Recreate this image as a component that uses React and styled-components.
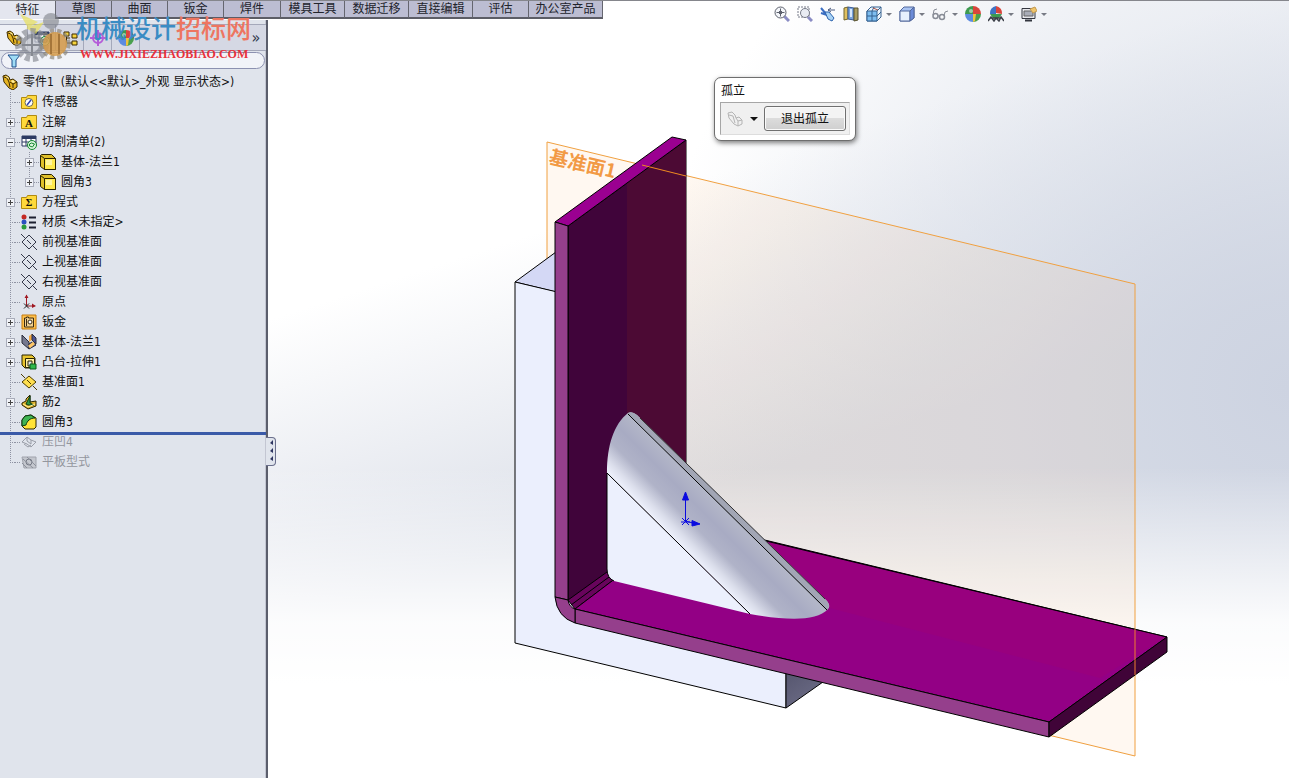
import React, { useState } from "react";
import styled, { createGlobalStyle } from "styled-components";

const tabs = [
  { name: "特征", width: 56 },
  { name: "草图", width: 56 },
  { name: "曲面", width: 56 },
  { name: "钣金", width: 56 },
  { name: "焊件", width: 57 },
  { name: "模具工具", width: 64 },
  { name: "数据迁移", width: 64 },
  { name: "直接编辑", width: 64 },
  { name: "评估", width: 56 },
  { name: "办公室产品", width: 74 },
];

const tree = [
  { icon: "sensor", text: "传感器" },
  { icon: "note", text: "注解", sign: "+" },
  { icon: "cutlist", text: "切割清单(2)", sign: "-" },
  { icon: "body", text: "基体-法兰1", sign: "+", level: 1 },
  { icon: "body", text: "圆角3", sign: "+", level: 1, lastChild: true },
  { icon: "sigma", text: "方程式", sign: "+" },
  { icon: "material", text: "材质 <未指定>" },
  { icon: "plane", text: "前视基准面" },
  { icon: "plane", text: "上视基准面" },
  { icon: "plane", text: "右视基准面" },
  { icon: "origin", text: "原点" },
  { icon: "sheet", text: "钣金", sign: "+" },
  { icon: "flange", text: "基体-法兰1", sign: "+" },
  { icon: "extrude", text: "凸台-拉伸1", sign: "+" },
  { icon: "planeGold", text: "基准面1" },
  { icon: "rib", text: "筋2", sign: "+" },
  { icon: "fillet", text: "圆角3" },
  { icon: "indent", text: "压凹4", off: true, rollback: true },
  { icon: "flat", text: "平板型式", off: true, last: true },
];

const folder = (
  <path d="M0.500 3.500h5l1-2h9v13h-15z" fill="#ffd93b" stroke="#b08a10" />
);

const icons = {
  part: (
    <>
      <path d="M1 2l3-1 3 2 1 3 3-1 4 3v5l-4 3-4-2-5-6z" fill="#e6b422" stroke="#3d2b00" />
      <path d="M2 3l3 1 2 4 1 5M8 8l3 2v4M11 10l4-2" stroke="#3d2b00" />
      <path d="M3 2l3 1 1 2-2-1zM9 7l2-1 2 2-2 1z" fill="#fff2a8" />
    </>
  ),
  sensor: (
    <>
      {folder}
      <circle cx="8" cy="8.500" r="4" fill="#fff" stroke="#6e6a50" />
      <path d="M6 11l4-5" stroke="#2b3fb0" strokeWidth="1.500" />
    </>
  ),
  note: (
    <>
      {folder}
      <text x="8" y="13" textAnchor="middle" fill="#111" fontFamily="Liberation Serif, serif" fontWeight="700" fontSize="11">A</text>
    </>
  ),
  cutlist: (
    <>
      <path d="M1 2h14v10H1z" fill="#fff" stroke="#2d3b62" />
      <path d="M1 2h14v3H1z" fill="#2d3b62" />
      <path d="M1 8h14M5 2v10M10 2v10" stroke="#2d3b62" />
      <circle cx="11" cy="11" r="4.500" fill="#d8f5dc" stroke="#15882f" />
      <path d="M8.500 10l2-1 3 1-2 3-3-1z" stroke="#15882f" />
    </>
  ),
  body: (
    <>
      <path d="M0.500 1.500l1-1h10l4 4v11h-11l-4-3z" fill="#e0c02a" stroke="#2b2400" />
      <path d="M4.500 4.500h11v11h-11z" fill="#ffe94d" stroke="#2b2400" />
      <path d="M0.500 1.500l4 3" stroke="#2b2400" />
      <path d="M6 6h6v5H6z" fill="#fff6a0" />
    </>
  ),
  sigma: (
    <>
      {folder}
      <text x="8" y="12" textAnchor="middle" fill="#111" fontFamily="Liberation Serif, serif" fontWeight="700" fontSize="10">Σ</text>
    </>
  ),
  material: (
    <>
      <circle cx="3" cy="3" r="2.500" fill="#c42a24" />
      <circle cx="3" cy="8" r="2.500" fill="#2b4fc0" />
      <circle cx="3" cy="13" r="2.500" fill="#2a9a3c" />
      <path d="M8 3.500h7M8 8.500h7M8 13.500h7" stroke="#1d2030" strokeWidth="2" />
    </>
  ),
  plane: (
    <path d="M8 1l7 7-7 7-7-7zM0 0l5 5M11 11l5 5M6 6l4 4" stroke="#333748" />
  ),
  origin: (
    <>
      <path d="M5.500 1v11h8" stroke="#a01822" />
      <path d="M3.500 4l2-3.500 2 3.500zM11 9.500l4 2.500-4 2z" fill="#a01822" />
      <path d="M3 9.500l5 5M8 9.500l-5 5" stroke="#222" />
    </>
  ),
  sheet: (
    <>
      <path d="M1 1h14v14H1z" fill="#ffc04a" stroke="#c27a10" />
      <path d="M3.500 13V4h2v-1h2v1h5v9z" fill="#f0d090" stroke="#3a2a10" />
      <circle cx="9" cy="8" r="2" fill="#fff" stroke="#3a2a10" />
      <path d="M5.500 5v7M12.500 4v9" stroke="#3a2a10" />
    </>
  ),
  flange: (
    <>
      <path d="M1 1l7 7v7L1 9z" fill="#74788f" stroke="#2a2c3a" />
      <path d="M8 8l3-2V0l-3 2z" fill="#f3a944" />
      <path d="M11 6l4 4V4l-4-4zM8 15l7-4-4-3-3 2z" fill="#4c5494" stroke="#2a2c3a" />
      <path d="M8 13l5-4" stroke="#ffc766" strokeWidth="3" />
    </>
  ),
  extrude: (
    <>
      <path d="M1 1h10l3 3v9l-1 1H4L1 11z" fill="#e9c52d" stroke="#2b2400" />
      <path d="M4.500 4.500h9v9h-9z" fill="#fff0a0" stroke="#2b2400" />
      <path d="M7 7h4v5H7z" fill="#e0e4ec" stroke="#2b2400" />
      <path d="M9 10h6v5H9z" fill="#2fb84a" stroke="#0b5a1c" />
    </>
  ),
  planeGold: (
    <>
      <path d="M8 2l7 6-7 6-7-6z" fill="#ffdf50" stroke="#4c3c00" />
      <path d="M0 0l4 4M12 12l4 4M6 6l4 4" stroke="#4c3c00" />
    </>
  ),
  rib: (
    <>
      <path d="M1 9l4-2v-2l4-4v7l6-1v5l-8 3-6-4z" fill="#e0b52c" stroke="#2b2400" />
      <path d="M5 10l4-8v7l4 2H7z" fill="#2f9a44" stroke="#0b3a14" />
      <path d="M2 10l5 3 7-3" stroke="#fff0a0" />
    </>
  ),
  fillet: (
    <>
      <path d="M1 6l3-4 6-1 5 3v9l-2 2H4l-3-3z" fill="#ffe236" stroke="#2b2400" />
      <path d="M1 6l3-4 6-1 4 3c-5 0-8 3-9 7l-4 1z" fill="#3fb452" stroke="#0b3a14" />
    </>
  ),
  indent: (
    <path d="M1 8l5-5 4 3 5 2-5 5-4-3zM6 3v4l4 3M3 10l4 3 3-2M10 6v4" stroke="#9a9ea8" />
  ),
  flat: (
    <>
      <path d="M1 3h14v11H3z" fill="#c4c7ce" stroke="#a0a3ac" />
      <circle cx="8" cy="8" r="3" stroke="#777b86" />
      <path d="M2 5l10 9M6 3l9 9M1 9l5 5" stroke="#8c909b" />
    </>
  ),
  config: (
    <>
      <path d="M2 2h5v4H2zM10 4h5v4h-5zM10 11h5v4h-5z" fill="#f5d33c" stroke="#3d2b00" />
      <path d="M4.500 6v7H10M4.500 8H8" stroke="#3d2b00" />
    </>
  ),
  target: (
    <>
      <circle cx="8" cy="8" r="5" stroke="#b55bd8" strokeWidth="2" />
      <path d="M8 0v16M0 8h16" stroke="#b55bd8" strokeWidth="2" />
    </>
  ),
  ball: (
    <>
      <path d="M8 8V0a8 8 0 0 1 8 8z" fill="#d8453c" />
      <path d="M8 8H0a8 8 0 0 1 8-8z" fill="#3d9a50" />
      <path d="M8 8v8a8 8 0 0 1-8-8z" fill="#5c8be0" />
      <path d="M8 8h8a8 8 0 0 1-8 8z" fill="#4aa04e" />
      <path d="M8 8h3l-1 7-2 1z" fill="#edc23c" />
      <circle cx="6" cy="5" r="2" fill="#ffffff" opacity="0.500" />
    </>
  ),
  funnel: <path d="M1 2h12l-4 5v7H5V7z" fill="#9fdcf5" stroke="#1e4f8c" />,
  zoomFit: (
    <>
      <path d="M10 10l5 5" stroke="#8a8cc4" strokeWidth="3" />
      <circle cx="6.500" cy="6.500" r="5.500" fill="#f4f6fa" stroke="#5c606c" />
      <path d="M6.500 2.500v8M2.500 6.500h8" stroke="#5c606c" strokeDasharray="3 2" />
      <path d="M5 5h3v3H5z" fill="#5c606c" />
    </>
  ),
  zoomArea: (
    <>
      <path d="M1 1h11v10H1z" stroke="#777b88" strokeDasharray="2 1" />
      <path d="M11 11l4 4" stroke="#8a8cc4" strokeWidth="3" />
      <circle cx="8" cy="7" r="4.500" fill="#e9ecf3" stroke="#777b88" />
    </>
  ),
  prevView: (
    <>
      <path d="M1 2l5 6M1 7l6 2" stroke="#3b6ec2" strokeWidth="2" />
      <path d="M5 6l4 0 5 6-2 3-4-2z" fill="#a9d3f5" stroke="#2a62ad" />
      <path d="M8 4h7M8 4l3-2M8 4l3 2" stroke="#4a5a80" />
    </>
  ),
  section: (
    <>
      <path d="M1 2l4-1v12l-4 1z" fill="#e0c060" stroke="#6f6430" />
      <path d="M5 1l6 1v12l-6-1z" fill="#79a3dc" stroke="#3b5c94" />
      <path d="M11 2l4 0v12l-4 1z" fill="#a99c60" stroke="#56502f" />
      <path d="M8 3v8" stroke="#d7e8fb" strokeWidth="2" />
    </>
  ),
  orient: (
    <>
      <path d="M1 5l4-4h10v10l-4 4H1z" fill="#eef6fd" stroke="#35608f" />
      <path d="M1 5h10v10H1z" fill="#7dbdf0" stroke="#35608f" />
      <path d="M11 5l4-4M6 5v10M1 10h10l4-4M8 1l-2 4" stroke="#35608f" />
      <path d="M7 2l5 2" stroke="#a8554a" />
    </>
  ),
  display: (
    <>
      <path d="M1 5l4-4h10v11l-4 3H1z" fill="#a9c3f2" stroke="#53689c" />
      <path d="M1 5h10v10H1z" fill="#e8f1fd" stroke="#53689c" />
      <path d="M11 5l4-4v11l-4 3z" fill="#6b8bd8" stroke="#53689c" />
    </>
  ),
  glasses: (
    <>
      <circle cx="3.500" cy="10" r="2.500" stroke="#888c96" strokeWidth="1.500" />
      <circle cx="10" cy="11" r="2.500" stroke="#888c96" strokeWidth="1.500" />
      <path d="M1 9l1-5 3-1M6 10l2 0M12 10l1-4 3-1" stroke="#888c96" />
    </>
  ),
  scene: (
    <>
      <path d="M8 7V0a7 7 0 0 1 6 8z" fill="#d8453c" />
      <path d="M8 8L2 8a7 7 0 0 1 6-8z" fill="#3f72c4" />
      <path d="M2 8h12l-3 4H5z" fill="#3d9a50" />
      <path d="M0 15l3-4 3 4 2-3 3 3 2-4 3 4M2 12h12" stroke="#3c4048" strokeWidth="1.500" />
    </>
  ),
  settings: (
    <>
      <path d="M1 2.500h13v10H1z" fill="#e6e7ec" stroke="#33363f" />
      <path d="M3 5h9v5H3z" fill="#a9adb8" stroke="#666" />
      <path d="M4 14.500h7" stroke="#33363f" strokeWidth="2" />
      <path d="M9 3l5-2 2 4-4 2z" fill="#f0c56a" stroke="#c49a50" />
    </>
  ),
};

const headsUp = [
  { icon: "zoomFit", label: "整屏显示全图" },
  { icon: "zoomArea", label: "局部放大" },
  { icon: "prevView", label: "上一视图" },
  { icon: "section", label: "剖面视图" },
  { icon: "orient", label: "视图定向", menu: true },
  { icon: "display", label: "显示样式", menu: true },
  { icon: "glasses", label: "隐藏项目", menu: true },
  { icon: "ball", label: "编辑外观" },
  { icon: "scene", label: "应用布景", menu: true },
  { icon: "settings", label: "视图设定", menu: true },
];

const Icon = ({ name }) => (
  <IconSvg viewBox="0 0 16 16" aria-hidden="true">
    {icons[name]}
  </IconSvg>
);

const Model = () => (
  <ModelSvg viewBox="268 20 1021 758" preserveAspectRatio="xMinYMin meet">
    <defs>
      <linearGradient id="rib" gradientUnits="userSpaceOnUse" x1="660" y1="525" x2="700" y2="485">
        <stop offset="0" stopColor="#eef1fc" />
        <stop offset="0.15" stopColor="#dcdfec" />
        <stop offset="0.42" stopColor="#b0b3c8" />
        <stop offset="0.7" stopColor="#a8abc3" />
        <stop offset="1" stopColor="#b3b7c8" />
      </linearGradient>
      <linearGradient id="end" x1="0" y1="0" x2="1" y2="1">
        <stop offset="0" stopColor="#55556e" />
        <stop offset="1" stopColor="#75758f" />
      </linearGradient>
    </defs>

    {/* reference plane */}
    <path d="M547 142L1135 284V756L547 614z" fill="#ffa050" fillOpacity="0.08" />
    <path d="M547 262V142L1135 284V756L1040 733" fill="none" stroke="#f0a040" />

    {/* backing block */}
    <g stroke="#000" strokeLinejoin="round">
      <path d="M515 282L556 252V292z" fill="#d4d8f5" />
      <path d="M515 282L570 295V600L786 660V708L515 643z" fill="#ebeffd" />
      <path d="M786 670L840 670L786 708z" fill="url(#end)" />
    </g>

    {/* flange */}
    <g stroke="#000" strokeLinejoin="round">
      <path d="M568 226L686 140V525L568 602z" fill="#40043a" />
      <path d="M627 183L686 141V525L627 560z" fill="#4c0a34" stroke="none" />
      <path d="M555 222L672 137L686 140L568 226z" fill="#9b0091" />
      <path d="M555 222L568 226V600L555 597z" fill="#953f8c" />
      <path d="M568 600L607 572L690 522L575 609z" fill="#68045c" />
      <path d="M575 609L690 522L1167 637L1049 722z" fill="#930085" />
      <path d="M826 607L1100 678L1166 637L768 542z" fill="#98007e" stroke="none" />
      <path d="M575 609L1049 722V737L575 623z" fill="#953f8c" />
      <path d="M1049 722L1167 637V652L1049 737z" fill="#400438" />
      <path d="M555 597L568 600Q569 607 575 609V623Q557 617 555 597z" fill="#953f8c" />
      <path d="M571 605L609 577M766 541L1167 637" fill="none" />
    </g>

    {/* rib */}
    <path d="M607 473V569Q607 578 614 581L750 614z" fill="#ecf0fd" />
    <path
      d="M607 473C607 445 614 424 628 413Q632 411 637 415L827 601Q831 606 828 609C816 622 785 620 750 614z"
      fill="url(#rib)"
    />
    <path d="M628 413Q632 411 637 415L827 601Q831 606 827 610z" fill="#a2a6b5" />
    <path d="M607 473L750 614M628 414L827 610" stroke="#000" fill="none" />
    <path d="M640 418L825 599" stroke="#333" fill="none" />
    <path d="M607 473V569Q607 578 614 581" stroke="#000" fill="none" />

    <path d="M642 165L686 176" stroke="#f08a20" />
    <path d="M1135 629V675" stroke="#f07a30" />

    {/* origin */}
    <g stroke="#0a0ae0" fill="#0a0ae0">
      <path d="M685.500 521V494M685 521l12 3M682 518l7 7M689 518l-7 7M681 522h9" />
      <path d="M682.500 500l3-8 3 8zM692 520.500l8 3.500-8 2z" />
    </g>

    <PlaneLabel transform="translate(548 163) rotate(13)">基准面1</PlaneLabel>
  </ModelSvg>
);

const Watermark = () => (
  <Mark>
    <MarkSvg viewBox="0 0 64 58" aria-hidden="true">
      <path d="M8 6l18 8-10 6zM14 20l18-6-8 12z" fill="#e8df5a" opacity="0.700" />
      <circle cx="39" cy="13" r="8" fill="#7d8087" opacity="0.600" />
      <circle cx="20" cy="37" r="14" fill="none" stroke="#8b8f97" strokeWidth="6" strokeDasharray="5 3" opacity="0.700" />
      <circle cx="20" cy="37" r="9" fill="#c9ccd2" stroke="#868a92" strokeWidth="4" opacity="0.750" />
      <path d="M20 26v22M10 37h20" stroke="#868a92" strokeWidth="2" />
      <circle cx="43" cy="36" r="13" fill="none" stroke="#8d887c" strokeWidth="5" strokeDasharray="4 3" opacity="0.700" />
      <circle cx="43" cy="36" r="12" fill="#d59a48" opacity="0.850" />
      <path d="M39 26v20M47 26v20" stroke="#a5763a" strokeWidth="2" />
    </MarkSvg>
    <div>
      <MarkName>
        机械设计<em>招标网</em>
      </MarkName>
      <MarkUrl>WWW.JIXIEZHAOBIAO.COM</MarkUrl>
    </div>
  </Mark>
);

export default function App() {
  const [active, setActive] = useState("特征");
  const [filter, setFilter] = useState("");

  return (
    <Page>
      <GlobalStyle />
      <Header>
        <Tabs>
          {tabs.map((tab) => (
            <Tab
              key={tab.name}
              $width={tab.width}
              $active={tab.name === active}
              onClick={() => setActive(tab.name)}
            >
              {tab.name}
            </Tab>
          ))}
        </Tabs>
        <HeadsUp>
          {headsUp.map((item) => (
            <ToolButton key={item.icon} aria-label={item.label}>
              <Icon name={item.icon} />
              {item.menu && <Caret />}
            </ToolButton>
          ))}
        </HeadsUp>
      </Header>
      <Body>
        <Sidebar>
          <PanelTabs>
            <PanelTab $active aria-label="设计树"><Icon name="part" /></PanelTab>
            <PanelTab aria-label="属性"><Icon name="cutlist" /></PanelTab>
            <PanelTab aria-label="配置"><Icon name="config" /></PanelTab>
            <PanelTab aria-label="尺寸"><Icon name="target" /></PanelTab>
            <PanelTab aria-label="外观"><Icon name="ball" /></PanelTab>
            <More>»</More>
          </PanelTabs>
          <Filter>
            <Icon name="funnel" />
            <FilterInput
              aria-label="过滤"
              value={filter}
              onChange={(e) => setFilter(e.target.value)}
            />
          </Filter>
          <Root>
            <Icon name="part" />
            <span>零件1&nbsp; (默认&lt;&lt;默认&gt;_外观 显示状态&gt;)</span>
          </Root>
          <Tree>
            {tree.map((row, i) => (
              <Row key={i} $level={row.level || 0} $off={row.off} $last={row.last} $lastChild={row.lastChild} $rollback={row.rollback}>
                {row.sign ? (
                  <Twist aria-label={row.text} $plus={row.sign === "+"} />
                ) : (
                  <NoTwist />
                )}
                <Dash />
                <Icon name={row.icon} />
                <RowText>{row.text}</RowText>
              </Row>
            ))}
          </Tree>
          <Splitter aria-label="折叠">
            <svg viewBox="0 0 8 26" width="8" height="26">
              <path d="M6 2v5L3 5zM6 10v5l-3-2zM6 18v5l-3-2z" fill="#2d3560" />
            </svg>
          </Splitter>
        </Sidebar>
        <Viewport>
          <Model />
          <Popup>
            <PopupTitle>孤立</PopupTitle>
            <PopupBar>
              <GhostButton aria-label="显示">
                <IconSvg viewBox="0 0 16 16">
                  <path d="M1 2l4-1 3 3 1 3 3-1 3 3v4l-4 2-4-2-5-6zM2 4l4 1 2 7M9 7l2 3v5M11 10l4-1" stroke="#b4b4b4" />
                </IconSvg>
                <Caret $dark />
              </GhostButton>
              <ExitButton>退出孤立</ExitButton>
            </PopupBar>
          </Popup>
        </Viewport>
      </Body>
      <Watermark />
    </Page>
  );
}

const GlobalStyle = createGlobalStyle`
  * {
    box-sizing: border-box;
  }
  body {
    margin: 0;
    font-family: "DejaVu Sans Condensed", "Noto Sans CJK SC", sans-serif;
    font-size: 12px;
    color: #111;
  }
  button {
    font: inherit;
    color: inherit;
    padding: 0;
    border: 0;
    background: none;
  }
`;
const Page = styled.div`
  position: relative;
  display: flex;
  flex-direction: column;
  min-height: 100vh;
  overflow: hidden;
  background:
    linear-gradient(to bottom, #ffffff00 60%, #ffffffe6 80%, #fff 88%),
    radial-gradient(ellipse 50% 80% at 100% 50%, #cdd3e1 0%, #d3d9e5a0 45%, #d8deea00 100%),
    linear-gradient(162deg, #fff 34%, #dce0e9 60%);
`;
const Header = styled.header`
  display: flex;
  align-items: flex-start;
  height: 20px;
  border-top: 1px solid #85868c;
`;
const Tabs = styled.nav`
  display: flex;
  flex: none;
`;
const Tab = styled.button`
  width: ${(p) => p.$width}px;
  height: 18px;
  line-height: 16px;
  background: ${(p) => (p.$active ? "#e4e6ef" : "#bcbdd2")};
  border-right: 1px solid #65666f;
  border-bottom: ${(p) => (p.$active ? "0" : "2px solid #5c5d66")};
  color: #22242c;
`;
const HeadsUp = styled.div`
  display: flex;
  gap: 7px;
  margin: 5px 0 0 171px;
`;
const ToolButton = styled.button`
  display: flex;
  align-items: center;
  gap: 4px;
`;
const Caret = styled.span`
  border: ${(p) => (p.$dark ? 4 : 3)}px solid transparent;
  border-top-color: ${(p) => (p.$dark ? "#111" : "#777a84")};
  border-bottom: 0;
`;
const IconSvg = styled.svg`
  display: block;
  flex: none;
  width: 16px;
  height: 16px;
  fill: none;
`;
const Body = styled.div`
  display: flex;
  flex: 1;
`;
const Sidebar = styled.aside`
  position: relative;
  flex: none;
  width: 268px;
  padding-top: 4px;
  background: #e0e4ec;
  border-right: 2px solid #5b5e6c;
  box-shadow: inset -1px 0 #c3c6d2;
`;
const PanelTabs = styled.div`
  display: flex;
  height: 27px;
  border-top: 1px solid #a4a8ba;
  border-bottom: 1px solid #a4a8ba;
  background: #d5d8e4;
`;
const PanelTab = styled.button`
  display: flex;
  align-items: center;
  justify-content: center;
  width: 28px;
  background: ${(p) => (p.$active ? "#eef0f6" : "transparent")};
  border-right: 1px solid #a4a8ba;
`;
const More = styled.button`
  margin-left: auto;
  width: 20px;
  font-size: 16px;
  line-height: 22px;
  color: #33384c;
`;
const Filter = styled.label`
  display: flex;
  align-items: center;
  height: 17px;
  margin: 1px 1px 3px;
  padding-left: 5px;
  background: #f1f3f8;
  border: 1px solid #8c91b0;
  border-radius: 9px;
`;
const FilterInput = styled.input`
  flex: 1;
  min-width: 0;
  border: 0;
  padding: 0 4px;
  height: 14px;
  font: inherit;
  background: transparent;
  outline: 0;
`;
const Root = styled.div`
  display: flex;
  align-items: center;
  gap: 5px;
  height: 20px;
  padding-left: 2px;
  line-height: 20px;
  white-space: nowrap;
`;
const Tree = styled.ul`
  list-style: none;
  margin: 0;
  padding: 0;
`;
const dots = "repeating-linear-gradient(#8f93a3 0 1px, transparent 1px 2px)";
const Row = styled.li`
  display: flex;
  align-items: center;
  height: 20px;
  padding-left: ${(p) => 6 + p.$level * 19}px;
  line-height: 20px;
  color: ${(p) => (p.$off ? "#93969e" : "inherit")};
  background:
    ${dots} 10px 0 / 1px ${(p) => (p.$last ? "50%" : "100%")} no-repeat,
    ${dots} 29px 0 / ${(p) => (p.$level ? "1px" : "0")} ${(p) => (p.$lastChild ? "50%" : "100%")} no-repeat;
  box-shadow: ${(p) => (p.$rollback ? "inset 0 3px #3a5aa8" : "none")};
`;
const Twist = styled.button`
  width: 9px;
  height: 9px;
  border: 1px solid #a9adba;
  background:
    linear-gradient(#444, #444) center / 5px 1px no-repeat,
    linear-gradient(#444, #444) center / 1px ${(p) => (p.$plus ? "5px" : "0")} no-repeat,
    #f0f2f7;
`;
const NoTwist = styled.span`
  width: 5px;
  height: 1px;
  margin-left: 4px;
  background: repeating-linear-gradient(90deg, #8f93a3 0 1px, transparent 1px 2px);
`;
const Dash = styled.span`
  width: 6px;
  height: 1px;
  background: repeating-linear-gradient(90deg, #8f93a3 0 1px, transparent 1px 2px);
`;
const RowText = styled.span`
  margin-left: 5px;
  white-space: nowrap;
`;
const Splitter = styled.button`
  position: absolute;
  top: 417px;
  right: -10px;
  width: 10px;
  height: 29px;
  background: #e0e4ec;
  border: 1px solid #6a6f8c;
  border-left: 0;
  border-radius: 0 4px 4px 0;
`;
const Viewport = styled.main`
  position: relative;
  flex: 1;
  min-width: 0;
`;
const ModelSvg = styled.svg`
  display: block;
  width: 100%;
`;
const PlaneLabel = styled.text`
  font-family: "Noto Sans CJK SC", sans-serif;
  font-size: 19px;
  font-weight: 700;
  fill: #f29a45;
`;
const Popup = styled.section`
  position: absolute;
  top: 57px;
  left: 446px;
  width: 142px;
  padding: 4px 5px 5px;
  background: #fff;
  border: 1px solid #6e6e6e;
  border-radius: 7px;
  box-shadow: 1px 2px 5px #00000080;
`;
const PopupTitle = styled.div`
  height: 20px;
  padding-left: 1px;
  line-height: 18px;
`;
const PopupBar = styled.div`
  display: flex;
  align-items: center;
  justify-content: space-between;
  height: 33px;
  padding: 0 3px 0 6px;
  background: #f0f0f0;
  border: 1px solid #a6a6a6;
  border-right-color: #ddd;
  border-bottom-color: #ddd;
`;
const GhostButton = styled.button`
  display: flex;
  align-items: center;
  gap: 7px;
`;
const ExitButton = styled.button`
  width: 82px;
  height: 25px;
  line-height: 22px;
  border: 1px solid #707070;
  border-radius: 3px;
  box-shadow: inset 0 0 0 1px #fafafa;
  background: linear-gradient(#f3f3f3 50%, #dcdcdc 50%, #cfcfcf);
`;
const Mark = styled.div`
  position: absolute;
  top: 8px;
  left: 12px;
  display: flex;
  pointer-events: none;
`;
const MarkSvg = styled.svg`
  width: 64px;
  height: 58px;
`;
const MarkName = styled.div`
  height: 38px;
  font-family: "Noto Sans CJK SC", sans-serif;
  font-size: 25px;
  font-weight: 500;
  line-height: 38px;
  color: #3a8cc4;
  white-space: nowrap;

  em {
    font-style: normal;
    color: #ee7560;
  }
`;
const MarkUrl = styled.div`
  margin-left: 4px;
  font-family: "Liberation Serif", serif;
  font-size: 12px;
  font-weight: 700;
  line-height: 16px;
  color: #e8323c;
`;
